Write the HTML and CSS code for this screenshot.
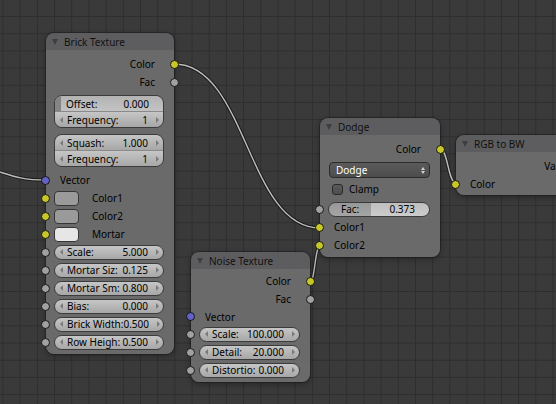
FILE: index.html
```html
<!DOCTYPE html>
<html lang="en">
<head>
  <meta charset="UTF-8" />
  <title>Node Editor</title>
  <link rel="stylesheet" href="styles.css">
</head>
<body>

  <div class="editor">
    <!-- Spojenia medzi uzlami: tmavý okraj + svetlé jadro -->
    <svg class="links" width="556" height="404" viewBox="0 0 556 404">
      <defs>
        <path id="l1" d="M174 64 C247 64 247 228 320 228"/>
        <path id="l2" d="M310 282 C315 282 315 246 320 246"/>
        <path id="l3" d="M440 149 C448 149 448 183 456 183"/>
        <path id="l4" d="M-40 166 C3 166 3 180 46 180"/>
      </defs>
      <g class="link-edge">
        <use href="#l1"/><use href="#l2"/><use href="#l3"/><use href="#l4"/>
      </g>
      <g class="link-core">
        <use href="#l1"/><use href="#l2"/><use href="#l3"/><use href="#l4"/>
      </g>
    </svg>

    <!-- Brick Texture -->
    <div class="node brick">
      <div class="node-head"><span class="tri"></span>Brick Texture</div>
      <div class="node-body">
        <div class="row out">Color<span class="sock col"></span></div>
        <div class="row out">Fac<span class="sock val"></span></div>

        <div class="group">
          <div class="field slider"><span class="fill"></span><span class="lbl">Offset:</span><span class="num">0.000</span></div>
          <div class="field"><i class="arr l"></i><span class="lbl">Frequency:</span><span class="num">1</span><i class="arr r"></i></div>
        </div>
        <div class="group second">
          <div class="field"><i class="arr l"></i><span class="lbl">Squash:</span><span class="num">1.000</span><i class="arr r"></i></div>
          <div class="field"><i class="arr l"></i><span class="lbl">Frequency:</span><span class="num">1</span><i class="arr r"></i></div>
        </div>

        <div class="row in vec-row"><span class="sock vec"></span>Vector</div>
        <div class="row in swatch-row"><span class="sock col"></span><span class="swatch"></span><span class="swatch-lbl">Color1</span></div>
        <div class="row in swatch-row"><span class="sock col"></span><span class="swatch"></span><span class="swatch-lbl">Color2</span></div>
        <div class="row in swatch-row"><span class="sock col"></span><span class="swatch light"></span><span class="swatch-lbl">Mortar</span></div>

        <div class="row in fld"><span class="sock val"></span><div class="field"><i class="arr l"></i><span class="lbl">Scale:</span><span class="num">5.000</span><i class="arr r"></i></div></div>
        <div class="row in fld"><span class="sock val"></span><div class="field"><i class="arr l"></i><span class="lbl">Mortar Siz:</span><span class="num">0.125</span><i class="arr r"></i></div></div>
        <div class="row in fld"><span class="sock val"></span><div class="field"><i class="arr l"></i><span class="lbl">Mortar Sm:</span><span class="num">0.800</span><i class="arr r"></i></div></div>
        <div class="row in fld"><span class="sock val"></span><div class="field"><i class="arr l"></i><span class="lbl">Bias:</span><span class="num">0.000</span><i class="arr r"></i></div></div>
        <div class="row in fld"><span class="sock val"></span><div class="field"><i class="arr l"></i><span class="lbl">Brick Width:</span><span class="num">0.500</span><i class="arr r"></i></div></div>
        <div class="row in fld"><span class="sock val"></span><div class="field"><i class="arr l"></i><span class="lbl">Row Heigh:</span><span class="num">0.500</span><i class="arr r"></i></div></div>
      </div>
    </div>

    <!-- Dodge (MixRGB) -->
    <div class="node dodge">
      <div class="node-head"><span class="tri"></span>Dodge</div>
      <div class="node-body">
        <div class="row out">Color<span class="sock col"></span></div>
        <div class="menu">
          <span class="menu-lbl">Dodge</span>
          <span class="updown"><i class="up"></i><i class="down"></i></span>
        </div>
        <div class="check-row"><span class="check"></span>Clamp</div>
        <div class="row in fld fac-row"><span class="sock val"></span><div class="field fac"><span class="lbl">Fac:</span><span class="num">0.373</span></div></div>
        <div class="row in"><span class="sock col"></span>Color1</div>
        <div class="row in"><span class="sock col"></span>Color2</div>
      </div>
    </div>

    <!-- RGB to BW -->
    <div class="node rgbbw">
      <div class="node-head"><span class="tri"></span>RGB to BW</div>
      <div class="node-body">
        <div class="row out">Value<span class="sock val"></span></div>
        <div class="row in"><span class="sock col"></span>Color</div>
      </div>
    </div>

    <!-- Noise Texture -->
    <div class="node noise">
      <div class="node-head"><span class="tri"></span>Noise Texture</div>
      <div class="node-body">
        <div class="row out">Color<span class="sock col"></span></div>
        <div class="row out">Fac<span class="sock val"></span></div>
        <div class="row in short"><span class="sock vec"></span>Vector</div>
        <div class="row in fld"><span class="sock val"></span><div class="field"><i class="arr l"></i><span class="lbl">Scale:</span><span class="num">100.000</span><i class="arr r"></i></div></div>
        <div class="row in fld"><span class="sock val"></span><div class="field"><i class="arr l"></i><span class="lbl">Detail:</span><span class="num">20.000</span><i class="arr r"></i></div></div>
        <div class="row in fld"><span class="sock val"></span><div class="field"><i class="arr l"></i><span class="lbl">Distortio:</span><span class="num">0.000</span><i class="arr r"></i></div></div>
      </div>
    </div>
  </div>

</body>
</html>
```

FILE: styles.css
```css
body {
  margin: 0;
  background: #3a3a3a;
  font-family: "Noto Sans", "DejaVu Sans", sans-serif;
  font-size: 10px;
  color: #000;
}

/* Plocha editora s mriežkou */
.editor {
  position: relative;
  width: 556px;
  height: 404px;
  overflow: hidden;
  background-color: #3a3a3a;
  background-image:
    linear-gradient(to right, #2e2e2e 1px, transparent 1px),
    linear-gradient(to bottom, #2e2e2e 1px, transparent 1px);
  background-size: 17.2px 17.2px;
  background-position: 2.5px 16px;
}

.links {
  position: absolute;
  left: 0;
  top: 0;
}
.links use {
  fill: none;
}
.link-edge {
  fill: none;
  stroke: #1c1c1c;
  stroke-width: 3.4;
}
.link-core {
  fill: none;
  stroke: #bdbdbd;
  stroke-width: 1.4;
}

/* Uzly */
.node {
  position: absolute;
  border-radius: 8px;
  box-shadow: 0 0 0 1px rgba(25,25,25,0.55), 0 2px 6px rgba(0,0,0,0.35);
}
.brick { left: 46px; top: 33px; width: 128px; }
.dodge { left: 320px; top: 118px; width: 120px; }
.rgbbw { left: 456px; top: 135px; width: 133px; }
.noise { left: 191px; top: 252px; width: 119px; }

.node-head {
  height: 17px;
  display: flex;
  align-items: center;
  padding-left: 6px;
  border-radius: 8px 8px 0 0;
  background: rgba(96,96,98,0.93);
  color: #111;
  white-space: nowrap;
  overflow: hidden;
}
.tri {
  width: 0;
  height: 0;
  border-left: 3.5px solid transparent;
  border-right: 3.5px solid transparent;
  border-top: 6px solid #3e3e3e;
  margin-right: 6px;
}

.node-body {
  padding: 5px 0 3px;
  border-radius: 0 0 8px 8px;
  background: rgba(112,112,112,0.9);
}
.noise .node-body { padding-top: 3px; }
.rgbbw .node-body { padding-bottom: 2px; }

.row {
  position: relative;
  height: 18px;
  display: flex;
  align-items: center;
  padding: 0 19px 0 14px;
  white-space: nowrap;
}
.row.out { justify-content: flex-end; }
.row.short { height: 17px; }
.vec-row { margin-top: 4px; }

/* Sokety */
.sock {
  position: absolute;
  top: 50%;
  width: 7px;
  height: 7px;
  margin-top: -4.5px;
  border: 1px solid #151515;
  border-radius: 50%;
}
.out .sock { right: -5px; }
.in .sock { left: -5px; }
.sock.col { background: #c7c729; }
.sock.val { background: #a1a1a1; }
.sock.vec { background: #6363c7; }

/* Farebné vzorky */
.swatch-row { padding-left: 8px; }
.swatch {
  width: 25px;
  height: 15px;
  box-sizing: border-box;
  border: 1px solid #363636;
  border-radius: 4px;
  background: #9a9a9a;
}
.swatch.light { background: #e6e6e6; }
.swatch-lbl { margin-left: 13px; }

/* Číselné polia */
.row.fld { padding: 0 10px 0 8px; }
.field {
  flex: 1;
  height: 15px;
  box-sizing: border-box;
  display: flex;
  align-items: center;
  padding: 0 4px 0 5px;
  border: 1px solid #3b3b3b;
  border-radius: 8px;
  background: linear-gradient(#c6c6c6, #a7a7a7);
  white-space: nowrap;
  overflow: hidden;
}
.lbl {
  flex: 1;
  margin-left: 4px;
}
.num { margin-right: 8px; }
.arr {
  width: 0;
  height: 0;
  border-top: 3px solid transparent;
  border-bottom: 3px solid transparent;
}
.arr.l { border-right: 3px solid #7a7a7a; }
.arr.r { border-left: 3px solid #7a7a7a; }

.group {
  margin: 4px 10px 0 8px;
  border: 1px solid #3b3b3b;
  border-radius: 8px;
  overflow: hidden;
}
.group.second { margin-top: 6px; }
.group .field {
  border: none;
  border-radius: 0;
}
.group .field + .field {
  height: 16px;
  border-top: 1px solid #8a8a8a;
}

.slider {
  position: relative;
  padding: 0 14px 0 11px;
  background: linear-gradient(#b3b3b3, #c3c3c3);
}
.slider .lbl { margin-left: 0; }
.slider .num { margin-right: 0; }
.slider .fill {
  position: absolute;
  left: 0;
  top: 0;
  bottom: 0;
  width: 6px;
  background: #858585;
}

.fac-row { margin-top: 3px; }
.field.fac {
  padding: 0 14px 0 12px;
  background:
    linear-gradient(rgba(0,0,0,0.05), rgba(255,255,255,0.06)),
    linear-gradient(to right, #a0a0a0 41.5%, #c9c9c9 41.5%);
}
.fac .lbl { margin-left: 0; }
.fac .num { margin-right: 0; }

/* Rozbaľovacie menu */
.menu {
  height: 16px;
  box-sizing: border-box;
  margin: 4px 10px 0 9px;
  display: flex;
  align-items: center;
  padding: 0 4px 0 6px;
  border: 1px solid #2b2b2b;
  border-radius: 4px;
  background: linear-gradient(#5b5b5b, #4d4d4d);
  color: #fff;
}
.menu-lbl { flex: 1; }
.updown {
  display: flex;
  flex-direction: column;
  gap: 1px;
}
.updown i {
  width: 0;
  height: 0;
  border-left: 2.5px solid transparent;
  border-right: 2.5px solid transparent;
}
.updown .up { border-bottom: 3px solid #d0d0d0; }
.updown .down { border-top: 3px solid #d0d0d0; }

.check-row {
  height: 16px;
  margin-top: 3px;
  display: flex;
  align-items: center;
  padding-left: 12px;
}
.check {
  width: 11px;
  height: 11px;
  box-sizing: border-box;
  margin-right: 6px;
  border: 1px solid #2a2a2a;
  border-radius: 3px;
  background: linear-gradient(#5a5a5a, #4e4e4e);
}
```
